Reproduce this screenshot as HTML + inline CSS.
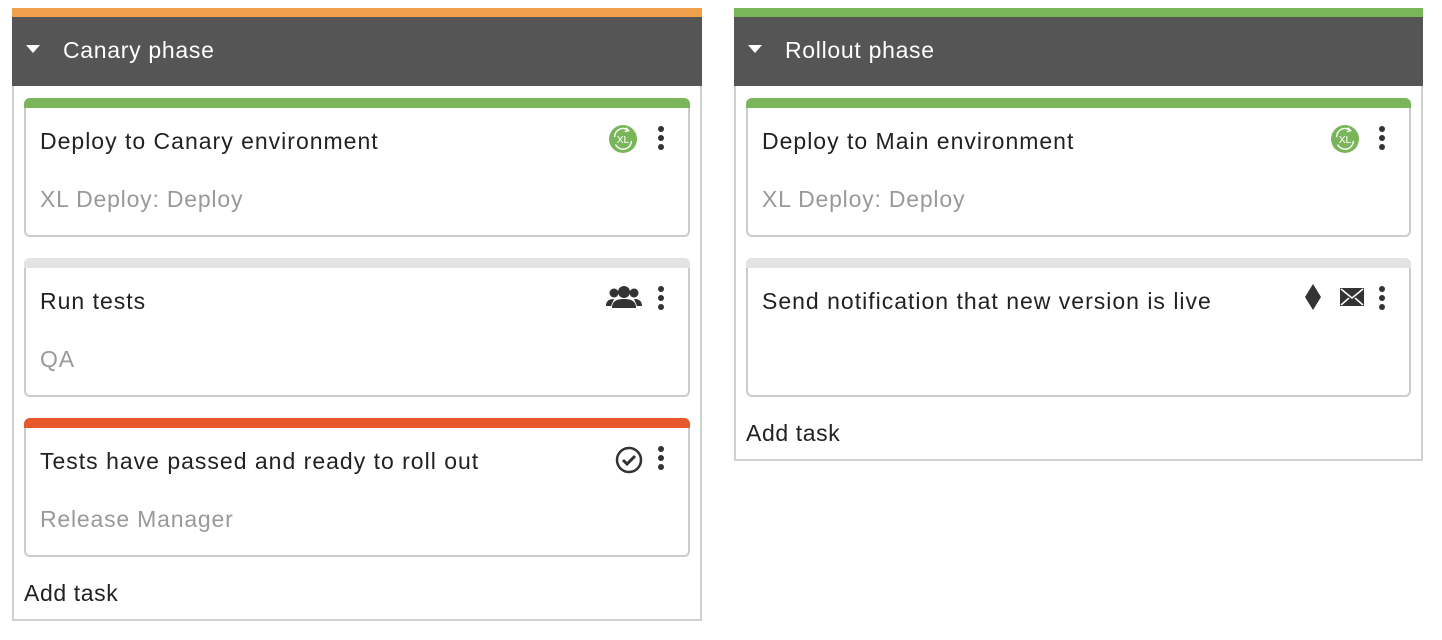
<!DOCTYPE html>
<html><head><style>
*{margin:0;padding:0;box-sizing:border-box}
body{width:1442px;height:640px;background:#fff;font-family:"Liberation Sans",sans-serif;position:relative;overflow:hidden}
.ph{position:absolute;top:8px}
.bar{height:9px}
.hd{height:69px;background:#555;color:#fff;font-size:23px;line-height:67px;padding-left:51px;position:relative;letter-spacing:0.7px}
.hd:before{content:"";position:absolute;left:14px;top:28px;border-left:7px solid transparent;border-right:7px solid transparent;border-top:8px solid #fff}
.bd{border:2px solid #d0d0d0;border-top:none;position:relative}
.card{position:absolute;left:10px;right:10px;height:139px;border:2px solid #ccc;border-top:none;border-radius:6px;background:#fff}
.card .tb{position:absolute;left:-2px;right:-2px;top:0;height:10px;border-radius:6px 6px 0 0}
.t{position:absolute;left:14px;top:30px;font-size:23px;color:#222;letter-spacing:1px}
.s{position:absolute;left:14px;top:88px;font-size:23px;color:#999;letter-spacing:0.8px}
.dots{position:absolute;right:24px;top:28px;width:6px}
.dots i{display:block;width:6px;height:6px;border-radius:50%;background:#333;margin-bottom:3px}
.add{position:absolute;left:10px;font-size:23px;color:#222;letter-spacing:0.6px}
.ic{position:absolute}
</style></head><body>
<div class="ph" style="left:12px;width:690px">
<div class="bar" style="background:#f0a04b"></div>
<div class="hd">Canary phase</div>
<div class="bd" style="height:535px">
 <div class="card" style="top:12px"><div class="tb" style="background:#7ab55c"></div>
  <div class="t">Deploy to Canary environment</div><div class="s">XL Deploy: Deploy</div>
  <svg class="ic" style="left:583px;top:27px" width="28" height="28" viewBox="0 0 30 30"><circle cx="15" cy="15" r="15" fill="#79b559"/><path d="M6 13a9 9 0 0 1 15-7M24 17a9 9 0 0 1-17 4" stroke="#fff" stroke-width="1.5" fill="none"/><path d="M18 3l3 3-4 1" stroke="#fff" stroke-width="1.5" fill="none"/><text x="15" y="19.5" font-size="11" fill="#fff" text-anchor="middle" font-family="Liberation Sans">XL</text></svg>
  <div class="dots"><i></i><i></i><i></i></div></div>
 <div class="card" style="top:172px"><div class="tb" style="background:#e3e3e3"></div>
  <div class="t">Run tests</div><div class="s">QA</div>
  <svg class="ic" style="left:580px;top:28px" width="36" height="22" viewBox="0 0 36 22"><circle cx="18" cy="6" r="6" fill="#333"/><path d="M6 22c0-7 5-9 12-9s12 2 12 9z" fill="#333"/><circle cx="8" cy="7" r="4.5" fill="#333"/><circle cx="28" cy="7" r="4.5" fill="#333"/><path d="M0 20c0-5 3-7 8-7l-3 7zM36 20c0-5-3-7-8-7l3 7z" fill="#333"/></svg>
  <div class="dots"><i></i><i></i><i></i></div></div>
 <div class="card" style="top:332px"><div class="tb" style="background:#e8582d"></div>
  <div class="t">Tests have passed and ready to roll out</div><div class="s">Release Manager</div>
  <svg class="ic" style="left:589px;top:28px" width="28" height="28" viewBox="0 0 28 28"><circle cx="14" cy="14" r="12" stroke="#333" stroke-width="2.5" fill="none"/><path d="M8 14l4 4 8-8" stroke="#333" stroke-width="3" fill="none"/></svg>
  <div class="dots"><i></i><i></i><i></i></div></div>
 <div class="add" style="top:494px">Add task</div>
</div></div>

<div class="ph" style="left:734px;width:689px">
<div class="bar" style="background:#7ab55c"></div>
<div class="hd">Rollout phase</div>
<div class="bd" style="height:375px">
 <div class="card" style="top:12px"><div class="tb" style="background:#7ab55c"></div>
  <div class="t">Deploy to Main environment</div><div class="s">XL Deploy: Deploy</div>
  <svg class="ic" style="left:583px;top:27px" width="28" height="28" viewBox="0 0 30 30"><circle cx="15" cy="15" r="15" fill="#79b559"/><path d="M6 13a9 9 0 0 1 15-7M24 17a9 9 0 0 1-17 4" stroke="#fff" stroke-width="1.5" fill="none"/><path d="M18 3l3 3-4 1" stroke="#fff" stroke-width="1.5" fill="none"/><text x="15" y="19.5" font-size="11" fill="#fff" text-anchor="middle" font-family="Liberation Sans">XL</text></svg>
  <div class="dots"><i></i><i></i><i></i></div></div>
 <div class="card" style="top:172px"><div class="tb" style="background:#e3e3e3"></div>
  <div class="t">Send notification that new version is live</div>
  <svg class="ic" style="left:556px;top:26px" width="18" height="26" viewBox="0 0 18 26"><path d="M9 0L17 13 9 26 1 13z" fill="#333"/></svg>
  <svg class="ic" style="left:592px;top:30px" width="24" height="18" viewBox="0 0 24 18"><rect width="24" height="18" fill="#333"/><path d="M1 1l11 9 11-9M1 17l8-7M23 17l-8-7" stroke="#fff" stroke-width="1.5" fill="none"/></svg>
  <div class="dots"><i></i><i></i><i></i></div></div>
 <div class="add" style="top:334px">Add task</div>
</div></div>
</body></html>
